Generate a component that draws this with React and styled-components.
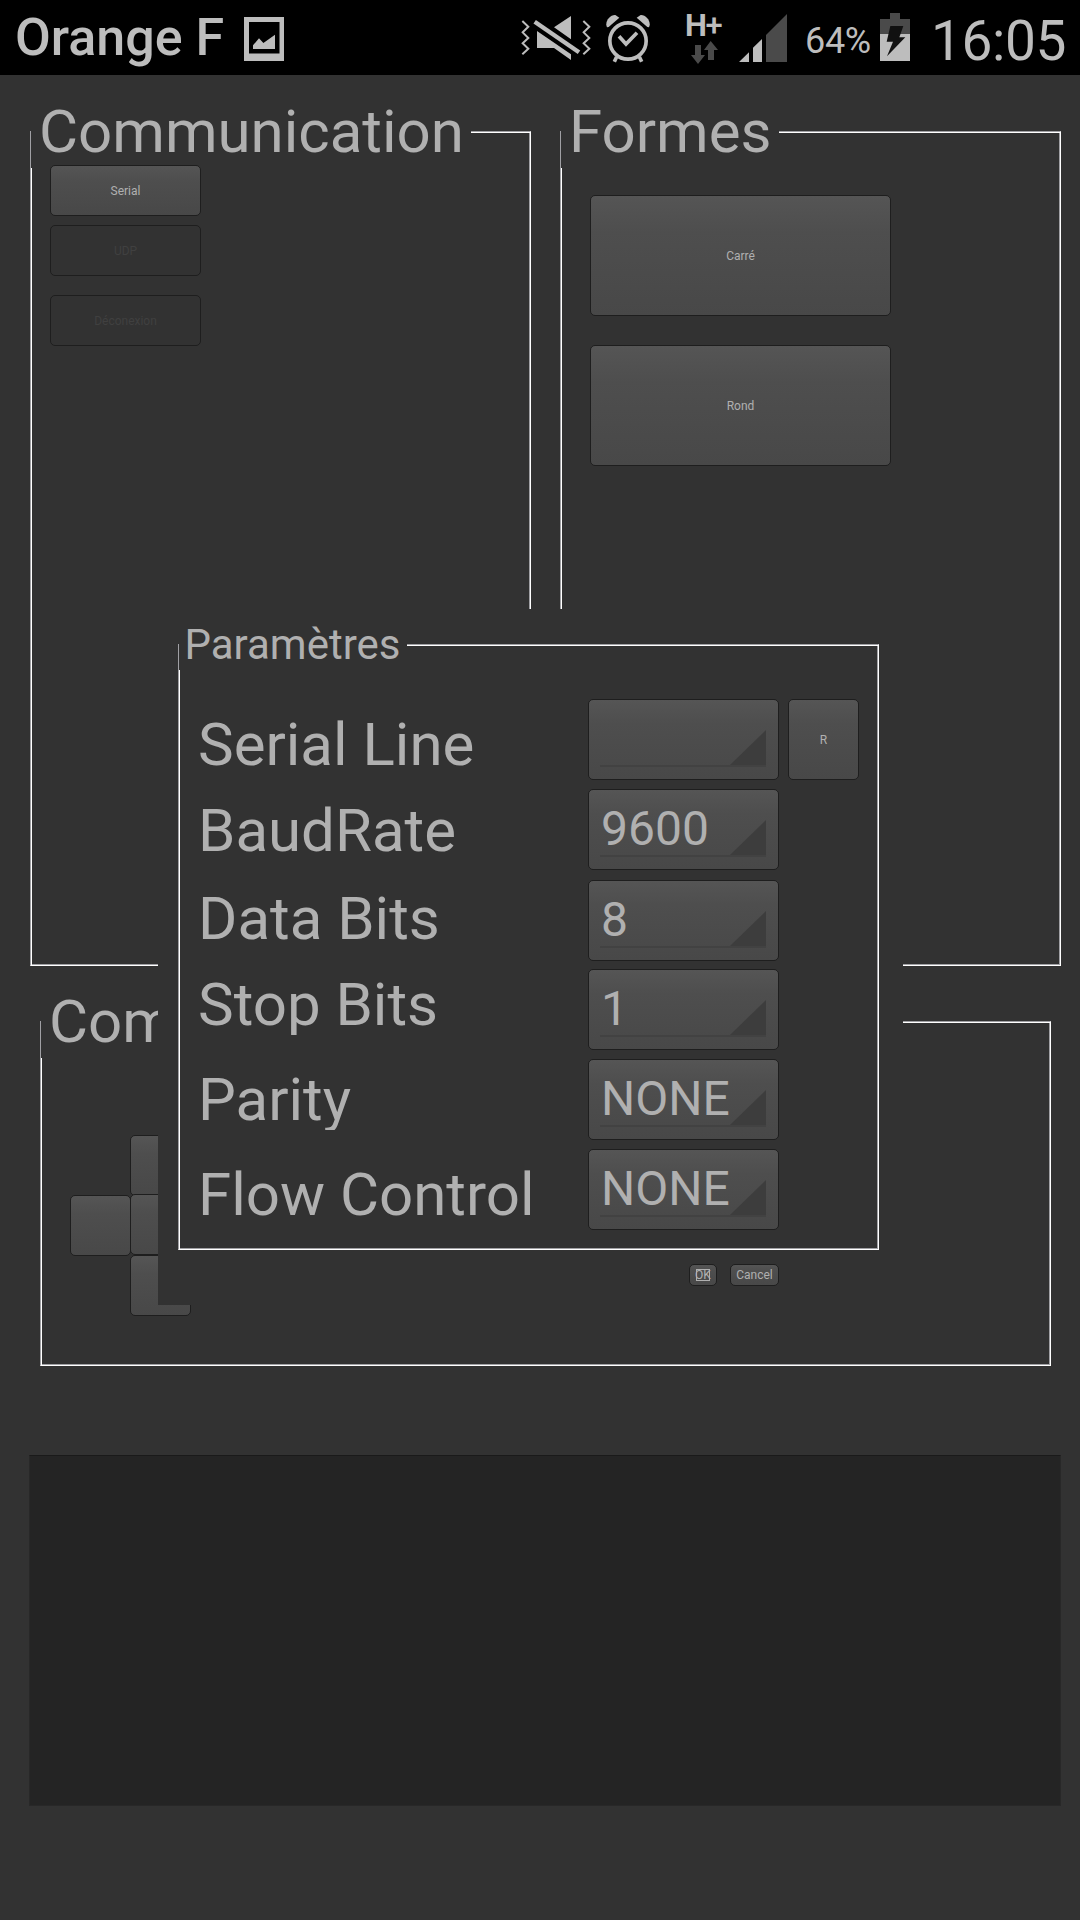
import React from "react";
import styled, { createGlobalStyle, css } from "styled-components";

const LIGHT = "#bdbdbd";
const DIM = "#4a4a4a";

const GlobalStyle = createGlobalStyle`
  * { box-sizing: border-box; }
  body { margin: 0; background: #323232; }
`;

const Screen = styled.div`
  position: relative;
  width: 1080px;
  height: 1920px;
  overflow: hidden;
  background: #323232;
  color: #b0b0b0;
  font-family: Roboto, "Liberation Sans", sans-serif;
`;

/* ---------- status bar ---------- */

const StatusBar = styled.header`
  display: flex;
  height: 75px;
  padding-left: 15px;
  background: #000;
  color: ${LIGHT};
  white-space: nowrap;
`;

const Carrier = styled.span`
  width: 229px;
  font-size: 52px;
  font-weight: 500;
  line-height: 75px;
`;

const Spacer = styled.div`
  flex: 1;
`;

const Glyph = styled.svg`
  display: block;
  flex: none;
  height: 75px;
  width: ${(p) => p.$w}px;
  margin-right: ${(p) => p.$after || 0}px;
`;

const Network = styled.div`
  flex: none;
  width: 39px;
  margin-right: 15px;
  padding-top: 8px;
`;

const NetworkName = styled.div`
  height: 33px;
  font-size: 31px;
  font-weight: 700;
  line-height: 36px;
  letter-spacing: -1.5px;
`;

const Plus = styled.span`
  font-weight: 500;
`;

const Traffic = styled.svg`
  display: block;
  width: 27px;
  height: 23px;
  margin-left: 6px;
`;

const Percent = styled.span`
  width: 75px;
  font-size: 36px;
  line-height: 82px;
  letter-spacing: -0.3px;
`;

const Clock = styled.span`
  width: 149px;
  font-size: 55px;
  line-height: 82px;
  letter-spacing: -0.4px;
`;

/* ---------- panels ---------- */

const Panels = styled.main`
  display: flex;
  flex-direction: column;
  padding-top: 56px;
`;

const TopRow = styled.div`
  display: flex;
  gap: 29px;
  padding-left: 30px;
  margin-bottom: 55px;
`;

const Group = styled.section`
  width: ${(p) => p.$w}px;
  height: ${(p) => p.$h}px;
  flex: none;
  margin-left: ${(p) => p.$left || 0}px;
  border: 1px solid;
  border-color: #a0a0a4 #fff #fff #a0a0a4;
  box-shadow: inset 1px 1px 0 #fff, inset -1px -1px 0 #a0a0a4;
`;

const Legend = styled.h2`
  width: ${(p) => p.$w}px;
  height: 74px;
  margin: -38px 0 0;
  padding-left: 8px;
  background: #323232;
  font-size: 60px;
  font-weight: 400;
  line-height: 75px;
  white-space: nowrap;
  ${(p) =>
    p.$small &&
    css`
      height: 52px;
      margin-top: -27px;
      padding-left: 5.5px;
      font-size: 42px;
      line-height: 53px;
    `}
`;

const Button = styled.button`
  display: flex;
  align-items: center;
  justify-content: center;
  flex: none;
  width: ${(p) => p.$w}px;
  height: ${(p) => p.$h}px;
  margin: 0;
  padding: 0;
  border: 1px solid #1e1e1e;
  border-radius: 5px;
  background: linear-gradient(#555, #4e4e4e 30%, #484848);
  color: #b0b0b0;
  font: 12px/14px Roboto, "Liberation Sans", sans-serif;

  &:disabled {
    background: #323232;
    color: #404040;
  }
`;

const LinkButtons = styled.div`
  display: flex;
  flex-direction: column;
  gap: 9px;
  margin: -3px 0 0 19px;

  & > :last-child {
    margin-top: 10px;
  }
`;

const ShapeButtons = styled.div`
  display: flex;
  flex-direction: column;
  gap: 29px;
  margin: 27px 0 0 29px;
`;

const Pad = styled.div`
  display: flex;
  align-items: flex-start;
  margin: 77px 0 0 29px;

  & > :first-child {
    margin-top: 60px;
  }
`;

const PadColumn = styled.div`
  display: flex;
  flex-direction: column;
  margin-left: -1px;

  & > :nth-child(2) {
    margin-top: -2px;
  }
`;

const Console = styled.div`
  width: 1032px;
  height: 351px;
  margin: 89px 0 0 29px;
  border: 1px solid #282828;
  border-top-color: #1a1a1a;
  background: #242424;
`;

/* ---------- dialog ---------- */

const Dialog = styled.div`
  position: absolute;
  left: 158px;
  top: 609px;
  width: 745px;
  height: 696px;
  padding: 35px 0 0 20px;
  background: #323232;
`;

const Form = styled.div`
  display: flex;
`;

const Labels = styled.div`
  flex: none;
  display: flex;
  flex-direction: column;
  width: 409px;
  padding-left: 19px;
`;

const LabelCell = styled.div`
  display: flex;
  align-items: flex-end;
  height: ${(p) => p.$h}px;
`;

const Label = styled.label`
  height: 66px;
  overflow: ${(p) => (p.$clip ? "hidden" : "visible")};
  font-size: 60px;
  line-height: 71px;
  white-space: nowrap;
`;

const Fields = styled.div`
  display: flex;
  flex-direction: column;
  margin-right: 9px;
`;

const Combo = styled.div`
  position: relative;
  width: 191px;
  height: 81px;
  margin-top: ${(p) => p.$gap}px;
  padding-left: 12px;
  border: 1px solid #1e1e1e;
  border-radius: 5px;
  background: linear-gradient(#555, #4e4e4e 30%, #484848);
  font-size: 48px;
  line-height: 77px;
`;

const ComboMark = styled.svg`
  position: absolute;
  left: 11px;
  top: 30px;
  width: 166px;
  height: 37px;
`;

const ComboText = styled.span`
  position: relative;
`;

const Side = styled.div`
  padding-top: 29px;
`;

const Actions = styled.div`
  display: flex;
  justify-content: flex-end;
  gap: 13px;
  padding: 14px 124px 0 0;
`;

const Focus = styled.span`
  display: flex;
  align-items: center;
  justify-content: center;
  width: 14px;
  height: 12px;
  border: 1px solid #b0b0b0;
`;

const fields = [
  { label: "Serial Line", value: "", labelHeight: 105, gap: 29 },
  { label: "BaudRate", value: "9600", labelHeight: 86, gap: 9 },
  { label: "Data Bits", value: "8", labelHeight: 88, gap: 10 },
  { label: "Stop Bits", value: "1", labelHeight: 86, gap: 8, clip: true },
  { label: "Parity", value: "NONE", labelHeight: 95, gap: 9, clip: true },
  { label: "Flow Control", value: "NONE", labelHeight: 95, gap: 9 },
];

function PictureIcon() {
  return (
    <Glyph $w={40} viewBox="0 0 40 75">
      <path fill={LIGHT} fillRule="evenodd" d="M0 17H40V61H0ZM5 22V53.5H35.5V22Z" />
      <path fill={LIGHT} d="M9 49V45.3L15 38.3L19.4 43L31 34.7V49Z" />
    </Glyph>
  );
}

function MuteIcon() {
  return (
    <Glyph $w={70} $after={15} viewBox="33 0 210 225">
      <g fill="none" stroke={LIGHT} strokeWidth="6">
        <path d="M37 63L55 80L38 97L55 114L38 130L55 146L37 163" />
        <path d="M220 63L238 80L221 97L238 114L221 130L238 146L220 163" />
      </g>
      <path fill={LIGHT} d="M132 82L183 48V118ZM81 93L183 163V180L132 144H81Z" />
      <path d="M74 65L207 157" stroke={LIGHT} strokeWidth="13" />
    </Glyph>
  );
}

function AlarmIcon() {
  return (
    <Glyph $w={44} $after={35} viewBox="288 0 132 225">
      <circle cx="354" cy="123" r="54.5" fill="none" stroke={LIGHT} strokeWidth="11" />
      <path d="M327 109L348 132L381 98" fill="none" stroke={LIGHT} strokeWidth="11" />
      <path fill={LIGHT} d="M291 82C283 66 299 44 316 45L328 53L296 81Z" />
      <path fill={LIGHT} d="M417 82C425 66 409 44 392 45L380 53L412 81Z" />
      <path d="M320 170L313 185M388 170L395 185" stroke={LIGHT} strokeWidth="11" />
    </Glyph>
  );
}

function SignalIcon() {
  return (
    <Glyph $w={48} $after={18} viewBox="687 0 144 225">
      <path fill={LIGHT} d="M687 186H717V157ZM729 186H756V117L729 143Z" />
      <path fill={DIM} d="M768 186H831V42L768 105Z" />
    </Glyph>
  );
}

function BatteryIcon() {
  return (
    <Glyph $w={30} $after={21} viewBox="300 0 90 225">
      <path fill={DIM} d="M300 57H330V39H360V57H390V102H300Z" />
      <path fill={LIGHT} d="M300 102H390V183H300Z" />
      <path fill="#111" d="M331 78H370L358 112H376L321 169L339 125H320Z" />
    </Glyph>
  );
}

export default function App() {
  return (
    <Screen>
      <GlobalStyle />
      <StatusBar>
        <Carrier>Orange F</Carrier>
        <PictureIcon />
        <Spacer />
        <MuteIcon />
        <AlarmIcon />
        <Network>
          <NetworkName>
            H<Plus>+</Plus>
          </NetworkName>
          <Traffic viewBox="543 123 81 69">
            <path
              fill={DIM}
              d="M555 135H573V165H585L564 192L543 165H555ZM594 180H612V150H624L602 123L582 150H594Z"
            />
          </Traffic>
        </Network>
        <SignalIcon />
        <Percent>64%</Percent>
        <BatteryIcon />
        <Clock>16:05</Clock>
      </StatusBar>

      <Panels>
        <TopRow>
          <Group $w={501} $h={835}>
            <Legend $w={440}>Communication</Legend>
            <LinkButtons>
              <Button $w={151} $h={51}>Serial</Button>
              <Button $w={151} $h={51} disabled>UDP</Button>
              <Button $w={151} $h={51} disabled>Déconexion</Button>
            </LinkButtons>
          </Group>
          <Group $w={501} $h={835}>
            <Legend $w={218}>Formes</Legend>
            <ShapeButtons>
              <Button $w={301} $h={121}>Carré</Button>
              <Button $w={301} $h={121}>Rond</Button>
            </ShapeButtons>
          </Group>
        </TopRow>
        <Group $w={1011} $h={345} $left={40}>
          <Legend $w={300}>Com</Legend>
          <Pad>
            <Button $w={61} $h={61} />
            <PadColumn>
              <Button $w={61} $h={61} />
              <Button $w={61} $h={61} />
              <Button $w={61} $h={61} />
            </PadColumn>
          </Pad>
        </Group>
        <Console />
      </Panels>

      <Dialog>
        <Group $w={701} $h={606}>
          <Legend $w={228} $small>Paramètres</Legend>
          <Form>
            <Labels>
              {fields.map((f) => (
                <LabelCell key={f.label} $h={f.labelHeight}>
                  <Label $clip={f.clip}>{f.label}</Label>
                </LabelCell>
              ))}
            </Labels>
            <Fields>
              {fields.map((f) => (
                <Combo key={f.label} $gap={f.gap}>
                  <ComboMark viewBox="0 0 166 37">
                    <path fill="#424242" d="M0 35H166V37H0Z" />
                    <path fill="#3d3d3d" d="M130 35L166 0V35Z" />
                  </ComboMark>
                  <ComboText>{f.value}</ComboText>
                </Combo>
              ))}
            </Fields>
            <Side>
              <Button $w={71} $h={81}>R</Button>
            </Side>
          </Form>
        </Group>
        <Actions>
          <Button $w={28} $h={22}>
            <Focus>OK</Focus>
          </Button>
          <Button $w={49} $h={22}>Cancel</Button>
        </Actions>
      </Dialog>
    </Screen>
  );
}
